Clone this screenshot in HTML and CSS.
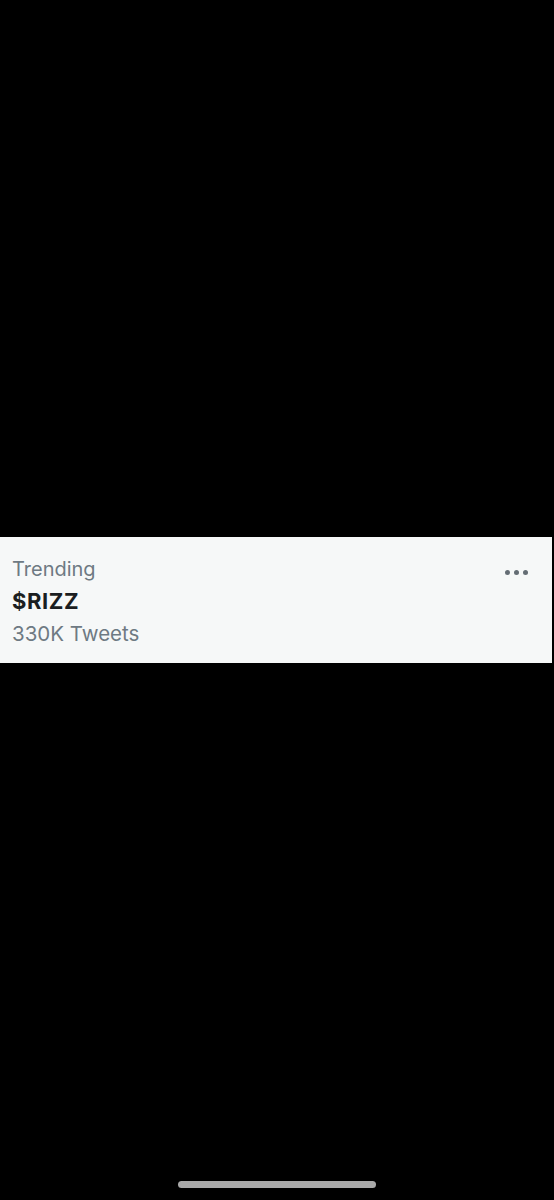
FILE: index.html
```html
<!DOCTYPE html>
<html>
<head>
<meta charset="utf-8">
<link rel="stylesheet" href="styles.css">
</head>
<body>
<div class="screen">
  <div class="spacer-top"></div>
  <div class="trend">
    <div class="trend-text">
      <div class="label">Trending</div>
      <div class="title">$RIZZ</div>
      <div class="count">330K Tweets</div>
    </div>
    <div class="more"><span></span><span></span><span></span></div>
  </div>
  <div class="spacer-bottom">
    <div class="home-indicator"></div>
  </div>
</div>
</body>
</html>
```
FILE: styles.css
```css
html, body {
  margin: 0;
  padding: 0;
  background: #000;
}
.screen {
  width: 554px;
  height: 1200px;
  display: flex;
  flex-direction: column;
  background: #000;
  font-family: Inter, "Liberation Sans", sans-serif;
}
.spacer-top {
  height: 537px;
  flex: none;
}
.trend {
  flex: none;
  width: 552px;
  height: 126px;
  box-sizing: border-box;
  background: #f6f8f8;
  display: flex;
  justify-content: space-between;
  padding: 17px 24px 0 12px;
}
.trend-text {
  display: flex;
  flex-direction: column;
}
.label {
  font-size: 20px;
  line-height: 30px;
  color: #6e7a83;
}
.title {
  font-size: 22px;
  line-height: 34px;
  font-weight: 700;
  letter-spacing: 0.6px;
  color: #1b1e21;
}
.count {
  font-size: 20.5px;
  line-height: 32px;
  color: #6e7a83;
}
.more {
  display: flex;
  gap: 4px;
  padding-top: 16px;
}
.more span {
  width: 5px;
  height: 5px;
  border-radius: 50%;
  background: #646d74;
}
.spacer-bottom {
  flex: 1;
  display: flex;
  justify-content: center;
  align-items: flex-end;
  padding-bottom: 12px;
}
.home-indicator {
  width: 198px;
  height: 7px;
  border-radius: 4px;
  background: #a9a9a9;
}
```
